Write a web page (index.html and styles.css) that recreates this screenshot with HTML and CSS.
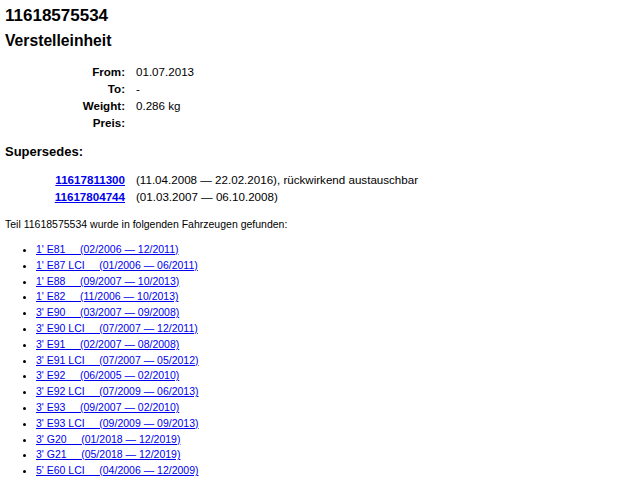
FILE: index.html
```
<!DOCTYPE html>
<html lang="de">

<head>
    <meta charset="UTF-8">
    <title>11618575534 Verstelleinheit</title>
    <link rel="stylesheet" href="styles.css">
</head>

<body>
    <h1>11618575534</h1>
    <h2>Verstelleinheit</h2>

    <table class="info">
        <tr><th>From:</th><td>01.07.2013</td></tr>
        <tr><th>To:</th><td>-</td></tr>
        <tr><th>Weight:</th><td>0.286 kg</td></tr>
        <tr><th>Preis:</th><td></td></tr>
    </table>

    <h3>Supersedes:</h3>
    <table class="supersedes">
        <tr>
            <th><a href="#">11617811300</a></th>
            <td>(11.04.2008 &mdash; 22.02.2016), rückwirkend austauschbar</td>
        </tr>
        <tr>
            <th><a href="#">11617804744</a></th>
            <td>(01.03.2007 &mdash; 06.10.2008)</td>
        </tr>
    </table>

    <p class="found">Teil 11618575534 wurde in folgenden Fahrzeugen gefunden:</p>

    <ul class="cars">
        <li><a href="#">1' E81&nbsp;&nbsp;&nbsp;&nbsp;&nbsp;(02/2006 &mdash; 12/2011)</a></li>
        <li><a href="#">1' E87 LCI&nbsp;&nbsp;&nbsp;&nbsp;&nbsp;(01/2006 &mdash; 06/2011)</a></li>
        <li><a href="#">1' E88&nbsp;&nbsp;&nbsp;&nbsp;&nbsp;(09/2007 &mdash; 10/2013)</a></li>
        <li><a href="#">1' E82&nbsp;&nbsp;&nbsp;&nbsp;&nbsp;(11/2006 &mdash; 10/2013)</a></li>
        <li><a href="#">3' E90&nbsp;&nbsp;&nbsp;&nbsp;&nbsp;(03/2007 &mdash; 09/2008)</a></li>
        <li><a href="#">3' E90 LCI&nbsp;&nbsp;&nbsp;&nbsp;&nbsp;(07/2007 &mdash; 12/2011)</a></li>
        <li><a href="#">3' E91&nbsp;&nbsp;&nbsp;&nbsp;&nbsp;(02/2007 &mdash; 08/2008)</a></li>
        <li><a href="#">3' E91 LCI&nbsp;&nbsp;&nbsp;&nbsp;&nbsp;(07/2007 &mdash; 05/2012)</a></li>
        <li><a href="#">3' E92&nbsp;&nbsp;&nbsp;&nbsp;&nbsp;(06/2005 &mdash; 02/2010)</a></li>
        <li><a href="#">3' E92 LCI&nbsp;&nbsp;&nbsp;&nbsp;&nbsp;(07/2009 &mdash; 06/2013)</a></li>
        <li><a href="#">3' E93&nbsp;&nbsp;&nbsp;&nbsp;&nbsp;(09/2007 &mdash; 02/2010)</a></li>
        <li><a href="#">3' E93 LCI&nbsp;&nbsp;&nbsp;&nbsp;&nbsp;(09/2009 &mdash; 09/2013)</a></li>
        <li><a href="#">3' G20&nbsp;&nbsp;&nbsp;&nbsp;&nbsp;(01/2018 &mdash; 12/2019)</a></li>
        <li><a href="#">3' G21&nbsp;&nbsp;&nbsp;&nbsp;&nbsp;(05/2018 &mdash; 12/2019)</a></li>
        <li><a href="#">5' E60 LCI&nbsp;&nbsp;&nbsp;&nbsp;&nbsp;(04/2006 &mdash; 12/2009)</a></li>
    </ul>
</body>

</html>
```

FILE: styles.css
```
body {
    font-family: "Liberation Sans", Arial, sans-serif;
    margin: 5px;
    color: #000;
    background-color: #fff;
}

h1 {
    font-size: 17px;
    margin: 0;
    line-height: 22px;
}

h2 {
    font-size: 15.7px;
    margin: 2px 0 0 0;
    line-height: 24px;
}

.info {
    margin: 10px 0 0 0;
    border-collapse: collapse;
    font-size: 11.6px;
}

.info th {
    width: 120px;
    text-align: right;
    padding: 0 10px 0 0;
    height: 17px;
}

.info td {
    padding: 0 0 0 1px;
}

h3 {
    font-size: 13px;
    margin: 11px 0 0 0;
    line-height: 20px;
}

.supersedes {
    margin: 9px 0 0 0;
    border-collapse: collapse;
    font-size: 11.6px;
}

.supersedes th {
    width: 120px;
    text-align: right;
    padding: 0 10px 0 0;
    height: 17px;
}

.supersedes td {
    padding: 0 0 0 1px;
}

a {
    color: #0000ee;
}

.found {
    font-size: 10.5px;
    line-height: 14px;
    margin: 12px 0 0 0;
}

.cars {
    font-size: 10.5px;
    margin: 11px 0 0 0;
    padding-left: 31px;
}

.cars li {
    line-height: 15.8px;
}
```
